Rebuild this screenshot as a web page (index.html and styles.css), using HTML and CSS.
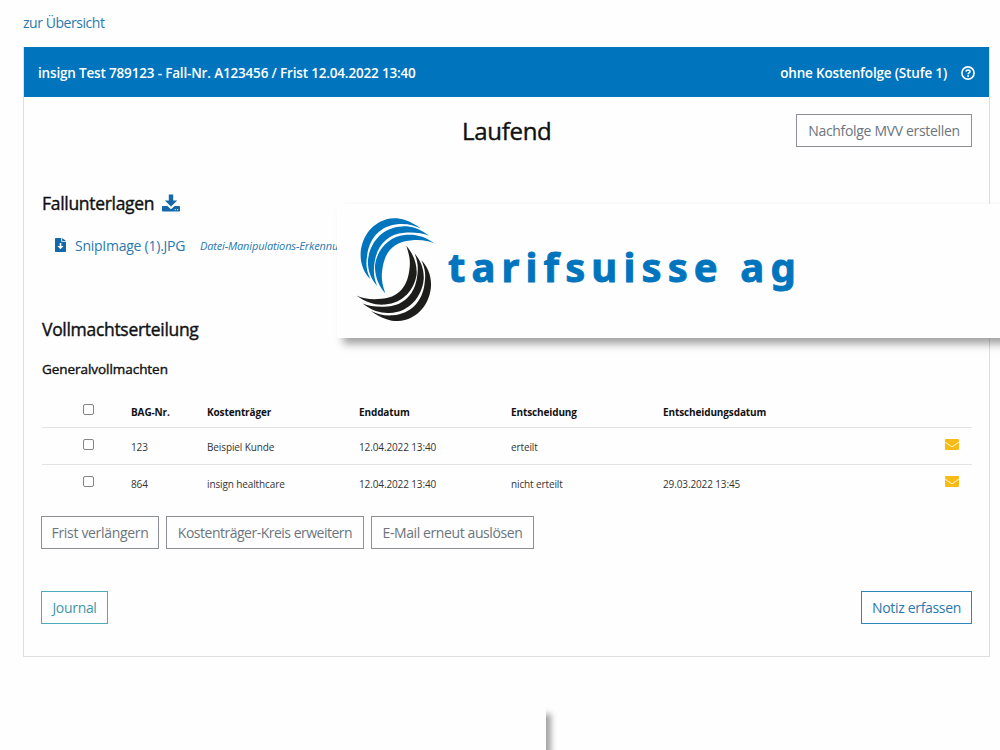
FILE: index.html
```html
<!DOCTYPE html>
<html lang="de">
<head>
  <meta charset="UTF-8" />
  <meta name="viewport" content="width=device-width, initial-scale=1.0"/>
  <title>Fall A123456 - tarifsuisse ag</title>
  <link rel="stylesheet" href="styles.css">
</head>
<body>

  <a class="back-link" href="#">zur Übersicht</a>

  <div class="card">
    <!-- Header -->
    <header class="card-header">
      <span>insign Test 789123 - Fall-Nr. A123456 / Frist 12.04.2022 13:40</span>
      <div class="level">
        <span>ohne Kostenfolge (Stufe 1)</span>
        <svg class="icon-help" viewBox="0 0 14 14">
          <circle cx="7" cy="7" r="6.1" fill="none" stroke="#fff" stroke-width="1.6"/>
          <path d="M5 5.6C5.1 4.4 5.9 3.9 7 3.9C8.2 3.9 9 4.6 9 5.5C9 6.8 7.1 6.8 7.1 8.2" fill="none" stroke="#fff" stroke-width="1.5"/>
          <circle cx="7.1" cy="10" r="0.95" fill="#fff"/>
        </svg>
      </div>
    </header>

    <div class="card-body">
      <div class="title-row">
        <h1>Laufend</h1>
        <button class="btn btn-follow">Nachfolge MVV erstellen</button>
      </div>

      <!-- Documents -->
      <div class="docs-title">
        <h2>Fallunterlagen</h2>
        <svg class="icon-download" viewBox="0 0 18 18">
          <path d="M6.8 0.5h4.4v6h4L9 12.6L2.8 6.5h4z"/>
          <path d="M0.8 12h4.6L9 15.2L12.6 12h4.6q.8 0 .8.8v3.9q0 .8-.8.8H.8q-.8 0-.8-.8v-3.9q0-.8.8-.8z"/>
          <circle cx="13.2" cy="15.7" r=".6" fill="#fff"/>
          <circle cx="15.6" cy="15.7" r=".6" fill="#fff"/>
        </svg>
      </div>
      <div class="file-row">
        <svg class="icon-file" viewBox="0 0 11 14">
          <path d="M.7 0H6.2V3.8H11V13.3q0 .7-.7.7H.7q-.7 0-.7-.7V.7Q0 0 .7 0z"/>
          <path d="M7.2 0L11 2.9H7.2z"/>
          <path d="M4.7 5h1.6v3h2.2L5.5 11.3L2.5 8h2.2z" fill="#fff"/>
        </svg>
        <a class="file-name" href="#">SnipImage (1).JPG</a>
        <a class="file-note" href="#">Datei-Manipulations-Erkennung</a>
      </div>

      <!-- Mandates -->
      <h2 class="h-mandate">Vollmachtserteilung</h2>
      <h3>Generalvollmachten</h3>

      <table class="mandates">
        <colgroup>
          <col class="c-check"><col class="c-bag"><col class="c-wide"><col class="c-wide"><col class="c-wide"><col class="c-date"><col>
        </colgroup>
        <thead>
          <tr>
            <th class="check"><input type="checkbox"></th>
            <th>BAG-Nr.</th>
            <th>Kostenträger</th>
            <th>Enddatum</th>
            <th>Entscheidung</th>
            <th>Entscheidungsdatum</th>
            <th></th>
          </tr>
        </thead>
        <tbody>
          <tr>
            <td class="check"><input type="checkbox"></td>
            <td>123</td>
            <td>Beispiel Kunde</td>
            <td>12.04.2022 13:40</td>
            <td>erteilt</td>
            <td></td>
            <td class="mail"><svg viewBox="0 0 14 11"><rect width="14" height="11" rx="1.2"/><path d="M0 3L6 7.3Q7 8 8 7.3L14 3" fill="none" stroke="#fff3cf" stroke-width="1"/></svg></td>
          </tr>
          <tr>
            <td class="check"><input type="checkbox"></td>
            <td>864</td>
            <td>insign healthcare</td>
            <td>12.04.2022 13:40</td>
            <td>nicht erteilt</td>
            <td>29.03.2022 13:45</td>
            <td class="mail"><svg viewBox="0 0 14 11"><rect width="14" height="11" rx="1.2"/><path d="M0 3L6 7.3Q7 8 8 7.3L14 3" fill="none" stroke="#fff3cf" stroke-width="1"/></svg></td>
          </tr>
        </tbody>
      </table>

      <div class="actions">
        <button class="btn btn-extend">Frist verlängern</button>
        <button class="btn btn-circle">Kostenträger-Kreis erweitern</button>
        <button class="btn btn-mail">E-Mail erneut auslösen</button>
      </div>

      <div class="footer-actions">
        <button class="btn btn-journal">Journal</button>
        <button class="btn btn-note">Notiz erfassen</button>
      </div>
    </div>
  </div>

  <!-- Logo banner over the page -->
  <div class="logo-banner">
    <svg class="logo-mark" viewBox="75 70 240 310">
      <!-- the black half is the blue half turned round -->
      <g id="swoosh">
        <path d="M270 101C235 75 205 70 190 71C130 74 92 125 91 180C91 210 103 235 120 252C107 225 107 205 110 185C116 130 150 92 205 88C230 86 252 92 270 101z"/>
        <path d="M295 123C265 100 240 94 215 95C155 97 118 145 113 195C111 225 122 252 140 272C129 245 129 225 133 200C140 155 168 118 222 114C250 112 275 115 295 123z"/>
        <path d="M313 147C285 125 255 118 228 120C175 123 140 165 134 210C132 245 147 275 165 295C153 260 152 245 157 215C165 170 190 141 240 137C268 134 292 137 313 147z"/>
      </g>
      <use href="#swoosh" fill="#1d1d1b" transform="rotate(180 196 224)"/>
    </svg>
    <span class="logo-text">tarifsuisse ag</span>
  </div>

  <div class="bottom-sheet"></div>

</body>
</html>
```

FILE: styles.css
```css
:root {
  --blue: #0075be;
  --link: #2a78ae;
  --grey: #6c757d;
  --line: #dedede;
}

* {
  box-sizing: border-box;
  margin: 0;
  padding: 0;
}

html {
  height: 750px;
  overflow: hidden;
}

body {
  position: relative;
  height: 750px;
  overflow: hidden;
  padding: 12px 10px 0 23px;
  background: #fefefe;
  color: #111;
  font-family: "Open Sans", "Noto Sans", sans-serif;
  font-size: 14px;
  letter-spacing: -0.25px;
}

a {
  color: var(--link);
  text-decoration: none;
}

.back-link {
  display: block;
  height: 35px;
  line-height: 21px;
  letter-spacing: -0.45px;
}

.card {
  height: 610px;
  border: 1px solid var(--line);
}

.card-header {
  height: 50px;
  margin-top: -1px;
  padding: 1px 14px 0 14px;
  display: flex;
  justify-content: space-between;
  align-items: center;
  background: var(--blue);
  color: #fff;
  font-size: 13.5px;
  font-weight: 600;
  letter-spacing: -0.17px;
  white-space: nowrap;
}

.level {
  display: flex;
  align-items: center;
  gap: 14px;
}

.icon-help {
  width: 14px;
  height: 14px;
}

.card-body {
  padding: 17px 17px 0 18px;
}

.title-row {
  display: flex;
  justify-content: flex-end;
  align-items: center;
  height: 33px;
}

h1 {
  width: 88px;
  margin-right: 246px;
  font-size: 24px;
  font-weight: 400;
  line-height: 32px;
  letter-spacing: -0.3px;
  -webkit-text-stroke: 0.4px #111;
  white-space: nowrap;
}

.btn {
  height: 33px;
  flex: none;
  border: 1px solid #8c9095;
  background: transparent;
  color: var(--grey);
  font-family: inherit;
  font-size: 14px;
  line-height: 20px;
  letter-spacing: -0.32px;
  text-align: center;
  white-space: nowrap;
}

.btn-follow { width: 176px; }
.btn-extend { width: 118px; }
.btn-circle { width: 198px; letter-spacing: -0.5px; }
.btn-mail { width: 163px; letter-spacing: -0.4px; }

.btn-journal {
  width: 67px;
  border-color: #4dabb9;
  color: #3e97a6;
}

.btn-note {
  width: 111px;
  border-color: #2f86bd;
  color: var(--link);
}

.docs-title {
  display: flex;
  align-items: center;
  gap: 8px;
  height: 24px;
  margin-top: 44px;
}

h2 {
  font-size: 17.5px;
  font-weight: 400;
  line-height: 24px;
  letter-spacing: -0.3px;
  -webkit-text-stroke: 0.4px #111;
  white-space: nowrap;
}

.icon-download {
  width: 18px;
  height: 18px;
  fill: #1467a8;
}

.file-row {
  display: flex;
  align-items: center;
  height: 20px;
  margin-top: 20px;
  padding-left: 13px;
  white-space: nowrap;
}

.icon-file {
  width: 11px;
  height: 14px;
  margin: 0 9px 1px 0;
  fill: #1467a8;
}

.file-name {
  width: 125px;
}

.file-note {
  font-size: 11px;
  font-style: italic;
  letter-spacing: -0.15px;
}

.h-mandate {
  margin-top: 62px;
}

h3 {
  margin-top: 18px;
  font-size: 13.5px;
  font-weight: 400;
  line-height: 20px;
  letter-spacing: -0.05px;
  -webkit-text-stroke: 0.4px #111;
}

.mandates {
  width: 930px;
  margin-top: 17px;
  table-layout: fixed;
  border-collapse: collapse;
  font-size: 10px;
  letter-spacing: -0.12px;
}

.c-check { width: 89px; }
.c-bag { width: 76px; }
.c-wide { width: 152px; }
.c-date { width: 240px; }

.mandates th,
.mandates td {
  height: 37px;
  text-align: left;
  vertical-align: middle;
  white-space: nowrap;
}

.mandates th {
  height: 31px;
  padding-top: 2px;
  font-weight: 700;
}

.mandates tr {
  border-bottom: 1px solid #e3e3e3;
}

.mandates tbody tr:last-child {
  border-bottom: none;
}

.mandates td {
  padding-top: 2px;
  color: #333;
}

.check input {
  display: block;
  width: 11px;
  height: 11px;
  margin: 0 0 5px 41px;
  appearance: none;
  border: 1px solid #858585;
  border-radius: 2px;
  background: #fff;
}

.mail svg {
  display: block;
  width: 14px;
  height: 11px;
  margin: 0 13px 4px auto;
  fill: #f7bb16;
}

.actions {
  display: flex;
  gap: 7px;
  margin: 15px 0 0 -1px;
}

.footer-actions {
  display: flex;
  justify-content: space-between;
  margin: 42px 0 0 -1px;
}

.logo-banner {
  position: absolute;
  top: 204px;
  left: 337px;
  width: 700px;
  height: 134px;
  padding: 14px 0 0 18px;
  display: flex;
  background: #fefefe;
  box-shadow: 6px 6px 8px rgba(0, 0, 0, 0.36);
}

.logo-mark {
  width: 81px;
  height: 104px;
  fill: var(--blue);
}

.logo-text {
  margin-left: 12px;
  color: var(--blue);
  font-family: "Noto Sans", "Open Sans", sans-serif;
  font-size: 40px;
  font-weight: 700;
  line-height: 98px;
  letter-spacing: 6.1px;
  -webkit-text-stroke: 0.9px var(--blue);
  white-space: nowrap;
}

.bottom-sheet {
  position: absolute;
  top: 708px;
  left: 0;
  width: 546px;
  height: 42px;
  background: #fefefe;
  box-shadow: 5px 6px 6px rgba(0, 0, 0, 0.36);
}
```
